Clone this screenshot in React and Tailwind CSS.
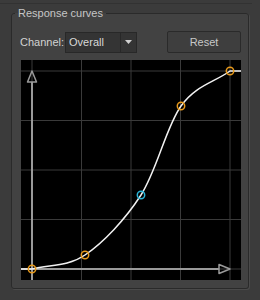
import React from "react";

const PTS = [
  [11, 209],
  [64, 195],
  [120, 135],
  [160, 46],
  [209, 11],
];

function curvePath(pts) {
  const n = pts.length;
  const T = pts.map((p, i) => {
    if (i === 0) return [pts[1][0] - p[0], pts[1][1] - p[1]];
    if (i === n - 1) return [p[0] - pts[i - 1][0], p[1] - pts[i - 1][1]];
    return [(pts[i + 1][0] - pts[i - 1][0]) / 2, (pts[i + 1][1] - pts[i - 1][1]) / 2];
  });
  let d = `M0,${pts[0][1]} L${pts[0][0]},${pts[0][1]}`;
  for (let i = 0; i < n - 1; i++) {
    const p = pts[i];
    const q = pts[i + 1];
    const c1 = [p[0] + T[i][0] / 3, p[1] + T[i][1] / 3];
    const c2 = [q[0] - T[i + 1][0] / 3, q[1] - T[i + 1][1] / 3];
    d += ` C${c1[0].toFixed(2)},${c1[1].toFixed(2)} ${c2[0].toFixed(2)},${c2[1].toFixed(2)} ${q[0]},${q[1]}`;
  }
  d += ` L220,${pts[n - 1][1]}`;
  return d;
}

const CURVE = curvePath(PTS);
const GRID = [11, 60.5, 110, 159.5, 209];

function Plot() {
  return (
    <svg width="220" height="220" viewBox="0 0 220 220" className="block bg-black">
      {GRID.map((g) => (
        <g key={g}>
          <line x1={g} y1="0" x2={g} y2="220" stroke="#3a3a3a" strokeWidth="1" />
          <line x1="0" y1={g} x2="220" y2={g} stroke="#3a3a3a" strokeWidth="1" />
        </g>
      ))}
      <line x1="11" y1="220" x2="11" y2="22" stroke="#9a9a9a" strokeWidth="2" />
      <polygon points="11,11 6.5,22 15.5,22" fill="none" stroke="#9a9a9a" strokeWidth="1.5" strokeLinejoin="round" />
      <line x1="0" y1="209" x2="198" y2="209" stroke="#9a9a9a" strokeWidth="2" />
      <polygon points="209,209 198,204.5 198,213.5" fill="none" stroke="#9a9a9a" strokeWidth="1.5" strokeLinejoin="round" />
      <path d={CURVE} fill="none" stroke="#f2f2f2" strokeWidth="1.5" strokeLinejoin="round" />
      {PTS.map(([x, y], i) => (
        <circle
          key={i}
          cx={x}
          cy={y}
          r="3.7"
          fill="none"
          stroke={i === 2 ? "#2ab4d8" : "#e89a1c"}
          strokeWidth="1.5"
        />
      ))}
    </svg>
  );
}

export default function App() {
  return (
    <div className="w-[260px] h-[300px] overflow-hidden bg-[#3b3b3b] font-['Liberation_Sans',Arial,sans-serif] text-[11px]">
      <div className="mt-[3px] h-px w-[252px] bg-[#323232]" />
      <fieldset className="ml-[11px] mt-[3px] w-[238px] min-w-0 rounded-[3px] border border-[#2a2a2a] bg-[#424242] p-0 pb-[8px] shadow-[1px_1px_0_#4a4a4a]">
        <legend className="ml-[3px] px-[3px] leading-[13px] text-[#c6c6c6]">Response curves</legend>
        <div className="ml-[9px] mt-[11px] w-[220px]">
          <div className="flex h-[22px] items-center">
            <span className="-ml-px text-[#d2d2d2]">Channel:</span>
            <div className="ml-[1px] flex h-[21px] w-[72px] border border-[#282828] bg-[#343434]">
              <span className="flex-1 pl-[3px] leading-[19px] text-[#d8d8d8]">Overall</span>
              <div className="flex w-[16px] items-center justify-center border-l border-[#282828]">
                <svg width="7" height="4" viewBox="0 0 7 4">
                  <polygon points="0,0 7,0 3.5,4" fill="#d0d0d0" />
                </svg>
              </div>
            </div>
            <button className="ml-auto h-[22px] w-[74px] rounded-[2px] border border-[#2a2a2a] bg-[#3e3e3e] leading-[20px] text-[#c8c8c8]">
              Reset
            </button>
          </div>
          <div className="mt-[7px]">
            <Plot />
          </div>
        </div>
      </fieldset>
    </div>
  );
}
